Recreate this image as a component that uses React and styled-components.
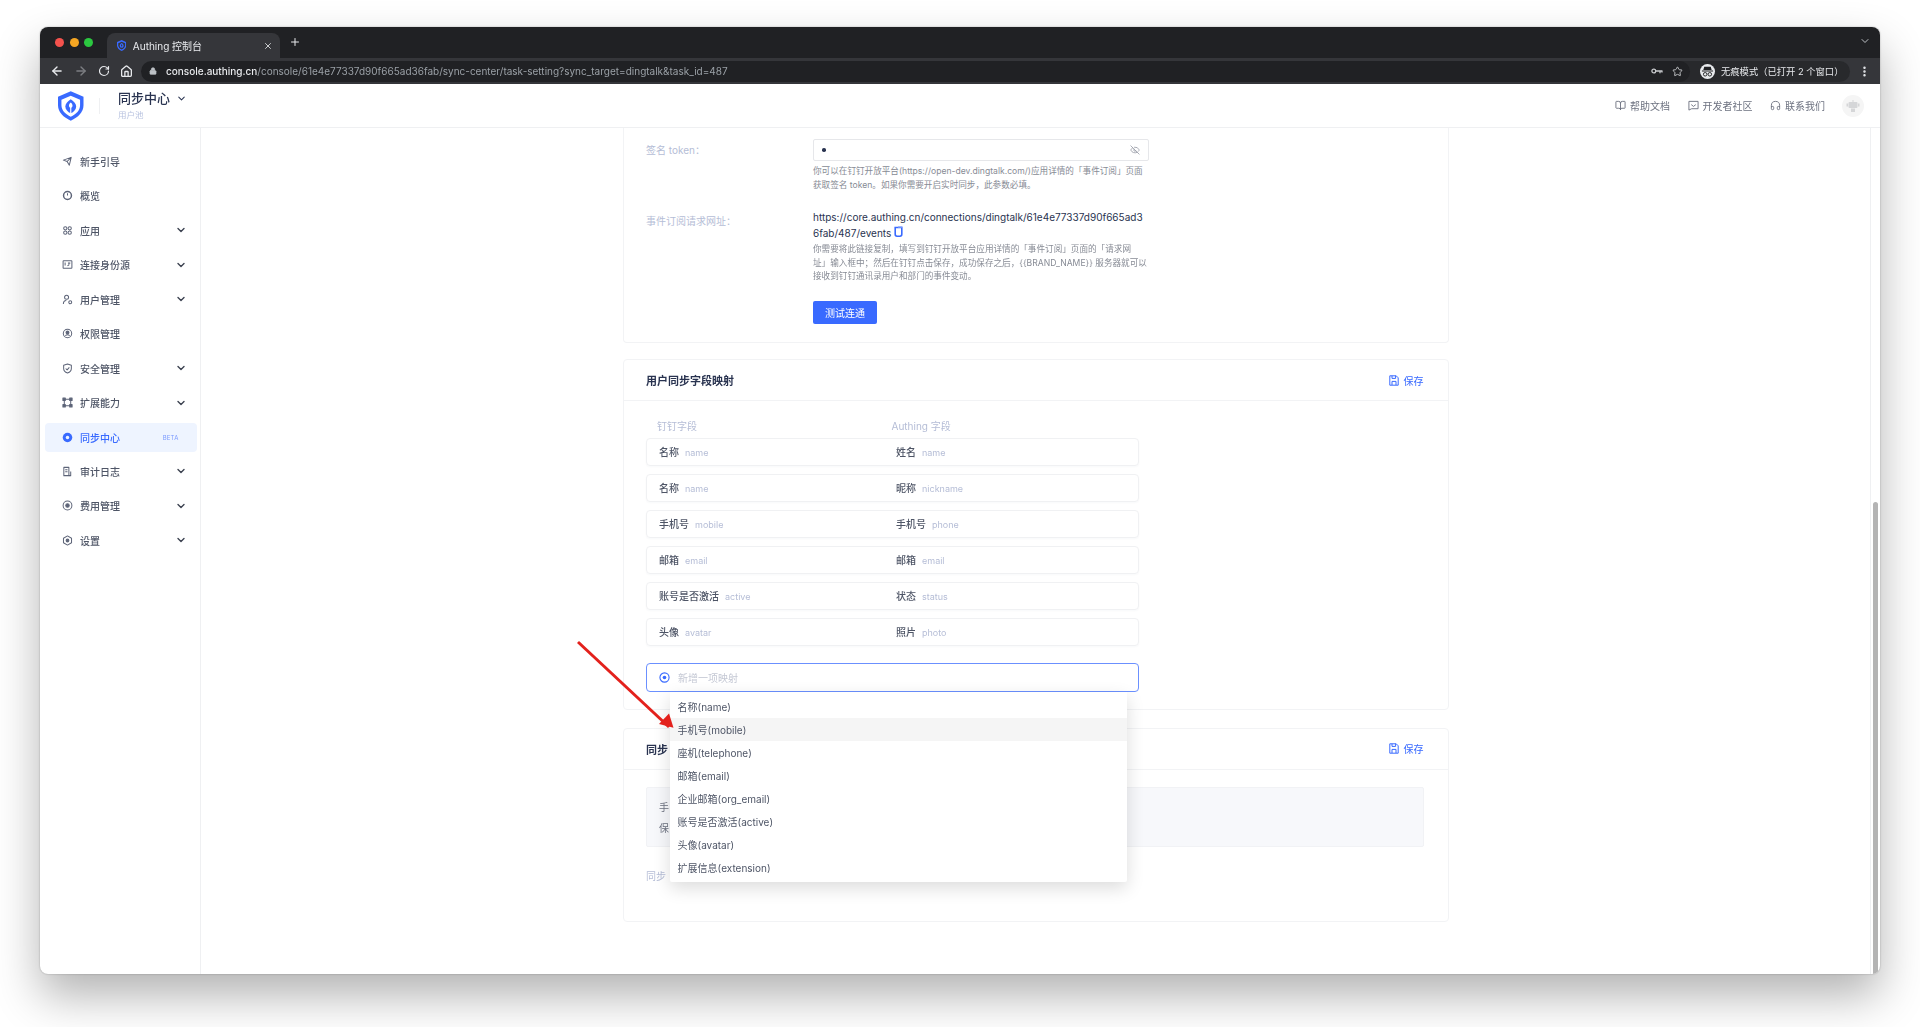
import React from 'react'
import styled, { createGlobalStyle } from 'styled-components'
import {
  ArrowLeft, ArrowRight, BookOpen, ChevronDown, EllipsisVertical, EyeOff,
  Headphones, House, Lock, Plus, RotateCw, Star, X
} from 'lucide-react'

//-----------------------------------------------------------------------------
// Data
//-----------------------------------------------------------------------------
const PRIMARY = '#396aff'
const TASK_URL = 'console/61e4e77337d90f665ad36fab/sync-center/task-setting?sync_target=dingtalk&task_id=487'

const NAV_ITEMS = [
  { label: '新手引导', icon: 'send' },
  { label: '概览', icon: 'gauge' },
  { label: '应用', icon: 'apps', more: true },
  { label: '连接身份源', icon: 'card', more: true },
  { label: '用户管理', icon: 'user', more: true },
  { label: '权限管理', icon: 'lock', },
  { label: '安全管理', icon: 'shield', more: true },
  { label: '扩展能力', icon: 'nodes', more: true },
  { label: '同步中心', icon: 'sync', active: true },
  { label: '审计日志', icon: 'log', more: true },
  { label: '费用管理', icon: 'coin', more: true },
  { label: '设置', icon: 'gear', more: true }
]

const MAPPINGS = [
  ['名称', 'name', '姓名', 'name'],
  ['名称', 'name', '昵称', 'nickname'],
  ['手机号', 'mobile', '手机号', 'phone'],
  ['邮箱', 'email', '邮箱', 'email'],
  ['账号是否激活', 'active', '状态', 'status'],
  ['头像', 'avatar', '照片', 'photo']
]

const OPTIONS = [
  '名称(name)', '手机号(mobile)', '座机(telephone)', '邮箱(email)',
  '企业邮箱(org_email)', '账号是否激活(active)', '头像(avatar)', '扩展信息(extension)'
]

//-----------------------------------------------------------------------------
// Icons
//-----------------------------------------------------------------------------
const NAV_PATHS = {
  send: <path d="M1.5 4.5 10 1.5 8 10 5.6 6 1.5 4.5ZM5.6 6 10 1.5" />,
  gauge: <><circle cx="6" cy="6" r="4.3" strokeWidth="1.6" /><path d="M6 6V3.5" /></>,
  apps: <><circle cx="3.6" cy="3.6" r="1.8" /><circle cx="8.4" cy="3.6" r="1.8" /><circle cx="3.6" cy="8.4" r="1.8" /><circle cx="8.4" cy="8.4" r="1.8" /></>,
  card: <><rect x="1.2" y="1.8" width="9.6" height="8.4" rx=".6" /><path d="M6.5 4.5h2.5M6 7.6l2-1.6M3.4 3.8v3.4" /></>,
  user: <><circle cx="5" cy="3.5" r="2.2" /><path d="M1.5 11c0-2.6 1.2-4 3.2-4" /><circle cx="9" cy="9" r="1.6" /></>,
  lock: <><circle cx="6" cy="6" r="4.6" /><circle cx="6" cy="5" r="1.6" fill="currentColor" /><path d="M3.6 8.4c1.2-1 3.6-1 4.8 0" /></>,
  shield: <path d="M6 1 10.2 2.4V6c0 2.6-2 4.2-4.2 5C3.8 10.2 1.8 8.6 1.8 6V2.4L6 1ZM4 6l1.6 1.5L8 4.8" />,
  nodes: <><path d="M3 2.5h6M3 9.5h6M2.5 3v6M9.5 3v6" /><rect x="1" y="1.2" width="2.6" height="2.6" fill="currentColor" /><rect x="8.4" y="1.2" width="2.6" height="2.6" fill="currentColor" /><rect x="1" y="8.2" width="2.6" height="2.6" fill="currentColor" /><rect x="8.4" y="8.2" width="2.6" height="2.6" fill="currentColor" /></>,
  sync: <><circle cx="6" cy="6" r="5.2" fill="currentColor" stroke="none" /><circle cx="6" cy="6" r="1.9" fill="#eef4ff" stroke="none" /></>,
  log: <><path d="M2 10.5V1.5h5.5v9H2ZM3.5 4h2.5M3.5 6.2h2.5" /><path d="M9.5 6v4.5H7.5" /></>,
  coin: <><circle cx="6" cy="6" r="4.8" /><circle cx="6" cy="6" r="1.9" fill="currentColor" /></>,
  gear: <><path d="M6 1 10.4 3.5V8.5L6 11 1.6 8.5V3.5L6 1Z" /><circle cx="6" cy="6" r="1.5" fill="currentColor" /></>
}

const NavIcon = ({ name }) => (
  <svg width="11" height="11" viewBox="0 0 12 12" fill="none" stroke="currentColor" strokeWidth="1.1" strokeLinejoin="round">
    {NAV_PATHS[name]}
  </svg>
)

const ShieldLogo = ({ size = 30, inner = '#fff' }) => (
  <svg width={size * 0.85} height={size} viewBox="0 0 26 30">
    <path d="M13 0 26 5.5V14c0 7.5-5.5 12.5-13 16C5.5 26.5 0 21.5 0 14V5.5L13 0Z" fill={PRIMARY} />
    <path d="M13 4.5 22.5 8.5V14c0 5.5-4 9.3-9.5 12-5.5-2.7-9.5-6.500-9.500-12V8.500L13 4.500Z" fill={inner} />
    <path d="M13 8c3.4 2.2 5.5 4.7 5.5 7.5 0 3.3-2.5 5.5-5.5 7-3-1.5-5.5-3.7-5.5-7C7.5 12.7 9.6 10.2 13 8Z" fill={PRIMARY} />
    <path d="M13 11.5c1.3 1 1.8 2.2 1.8 3.3 0 1-.7 1.8-1.8 2.4-1.1-.6-1.8-1.4-1.8-2.4 0-1.1.5-2.3 1.8-3.3Z" fill={inner} />
    <path d="M13 17v6" stroke={inner} strokeWidth="1.2" />
  </svg>
)

const SaveIcon = () => (
  <svg width="10" height="11" viewBox="0 0 10 11" fill="none" stroke="currentColor" strokeWidth="1">
    <path d="M.8.8h6.4l2 2v7.4H.8V.8Z" />
    <path d="M3 .8v2.6h3.6V.8M3 10V6.4h4V10" />
  </svg>
)

const CopyIcon = () => (
  <svg width="9" height="11" viewBox="0 0 9 11" fill="none" stroke={PRIMARY} strokeWidth="1.6">
    <path d="M1.2 1.5h6.6v6.8c0 1-.7 1.9-1.9 1.9H3c-1 0-1.8-.8-1.8-1.9V1.5Z" />
    <path d="M4 .7h4.3" stroke="#9db6ff" />
  </svg>
)

const AddIcon = () => (
  <svg width="11" height="11" viewBox="0 0 12 12" fill="none" stroke={PRIMARY} strokeWidth="1.2">
    <circle cx="6" cy="6" r="5" />
    <circle cx="6" cy="6" r="2" fill={PRIMARY} stroke="none" />
  </svg>
)

const CommunityIcon = () => (
  <svg width="11" height="11" viewBox="0 0 12 12" fill="none" stroke="currentColor" strokeWidth="1">
    <path d="M1 1.5h10v8H4L1 11V1.5Z" />
    <path d="M3.5 5 6 7l2.5-2" />
  </svg>
)

const SavedKeyIcon = () => (
  <svg width="12" height="8" viewBox="0 0 12 8" fill="none" stroke="#c8cacd" strokeWidth="1.3">
    <circle cx="2.8" cy="4" r="1.9" />
    <path d="M4.8 4H11.5M9 4v2.2M11 4v1.6" />
  </svg>
)

const IncognitoIcon = () => (
  <IncognitoBadge>
    <svg width="13" height="13" viewBox="0 0 14 14" fill="#202124">
      <path d="M3.5 2h7l1 3.5h-9L3.5 2ZM1 6h12v1H1V6Z" />
      <circle cx="4.5" cy="10" r="1.9" fill="none" stroke="#202124" strokeWidth="1" />
      <circle cx="9.5" cy="10" r="1.9" fill="none" stroke="#202124" strokeWidth="1" />
    </svg>
  </IncognitoBadge>
)

const RobotAvatar = () => (
  <Avatar>
    <svg width="14" height="14" viewBox="0 0 14 14" fill="#d5d6d8">
      <rect x="2.5" y="3" width="9" height="6" rx="1" />
      <rect x="0.5" y="4.5" width="1.5" height="3" />
      <rect x="12" y="4.5" width="1.5" height="3" />
      <rect x="5" y="9.5" width="4" height="3.5" />
      <rect x="6.5" y="1" width="1" height="2" />
    </svg>
  </Avatar>
)

const RedArrow = () => (
  <ArrowOverlay width="110" height="100" viewBox="0 0 110 100">
    <path d="M8 7 99 92" stroke="#e3211c" strokeWidth="3" />
    <path d="M103.5 92.7 89 89 99 78.5Z" fill="#e3211c" />
  </ArrowOverlay>
)

//-----------------------------------------------------------------------------
// Component
//-----------------------------------------------------------------------------
const CardHeader = ({ title }) => (
  <CardHead>
    <CardTitle>{title}</CardTitle>
    <SaveButton><SaveIcon />保存</SaveButton>
  </CardHead>
)

const App = () => {
  return (
    <>
      <GlobalStyle />
      <BrowserWindow>
        <TabStrip>
          <TrafficLights>
            <Light color="#f4524d" />
            <Light color="#f5a623" />
            <Light color="#2bc840" />
          </TrafficLights>
          <Tab>
            <ShieldLogo size={11} inner="#35363a" />
            <TabTitle>Authing 控制台</TabTitle>
            <X size={10} color="#e8eaed" />
          </Tab>
          <NewTab><Plus size={12} /></NewTab>
          <TabMenu><ChevronDown size={12} /></TabMenu>
        </TabStrip>

        <Toolbar>
          <NavButtons>
            <ArrowLeft size={14} strokeWidth={2.4} color="#e8eaed" />
            <ArrowRight size={14} strokeWidth={2.4} color="#7c7e82" />
            <RotateCw size={12} strokeWidth={2.4} color="#e8eaed" />
            <House size={13} strokeWidth={2.4} color="#e8eaed" />
          </NavButtons>
          <AddressBar>
            <Lock size={8} color="#bdc1c6" fill="#bdc1c6" />
            <UrlText><strong>console.authing.cn</strong>/{TASK_URL}</UrlText>
            <SavedKeyIcon />
            <Star size={11} color="#c8cacd" />
          </AddressBar>
          <IncognitoPill>
            <IncognitoIcon />
            无痕模式（已打开 2 个窗口）
          </IncognitoPill>
          <ToolbarMenu><EllipsisVertical size={13} strokeWidth={2.6} /></ToolbarMenu>
        </Toolbar>

        <AppHeader>
          <LogoCell><ShieldLogo size={30} /></LogoCell>
          <AppTitleBlock>
            <AppTitle>同步中心 <ChevronDown size={11} strokeWidth={2.2} /></AppTitle>
            <AppSubtitle>用户池</AppSubtitle>
          </AppTitleBlock>
          <HeaderLinks>
            <HeaderLink><BookOpen size={11} />帮助文档</HeaderLink>
            <HeaderLink><CommunityIcon />开发者社区</HeaderLink>
            <HeaderLink><Headphones size={11} />联系我们</HeaderLink>
          </HeaderLinks>
          <RobotAvatar />
        </AppHeader>

        <Workspace>
          <Sidebar>
            {NAV_ITEMS.map(item => (
              <NavItem key={item.label} $active={item.active}>
                <NavIconSlot $active={item.active}><NavIcon name={item.icon} /></NavIconSlot>
                <NavLabel>{item.label}</NavLabel>
                {item.active && <BetaTag>BETA</BetaTag>}
                {item.more && <ChevronDown size={12} strokeWidth={2.8} color="#3c4250" />}
              </NavItem>
            ))}
          </Sidebar>

          <Main>
            <Column>
              <ClippedCard>
                <FormRow>
                  <FormLabel>签名 token：</FormLabel>
                  <div>
                    <SecretInput>
                      <SecretDot />
                      <EyeOff size={10} color="#9a9ea8" />
                    </SecretInput>
                    <HelpText>
                      你可以在钉钉开放平台(https://open-dev.dingtalk.com/)应用详情的「事件订阅」页面<br />
                      获取签名 token。如果你需要开启实时同步，此参数必填。
                    </HelpText>
                  </div>
                </FormRow>
                <FormRow $spaced>
                  <FormLabel $offset>事件订阅请求网址：</FormLabel>
                  <div>
                    <UrlValue>
                      https://core.authing.cn/connections/dingtalk/61e4e77337d90f665ad3<br />
                      6fab/487/events <CopyIcon />
                    </UrlValue>
                    <HelpText $tight>
                      你需要将此链接复制，填写到钉钉开放平台应用详情的「事件订阅」页面的「请求网<br />
                      址」输入框中；然后在钉钉点击保存，成功保存之后，{'{{BRAND_NAME}}'} 服务器就可以<br />
                      接收到钉钉通讯录用户和部门的事件变动。
                    </HelpText>
                    <PrimaryButton>测试连通</PrimaryButton>
                  </div>
                </FormRow>
              </ClippedCard>

              <Card>
                <CardHeader title="用户同步字段映射" />
                <MappingBody>
                  <MappingHead>
                    <span>钉钉字段</span>
                    <span>Authing 字段</span>
                  </MappingHead>
                  {MAPPINGS.map(([from, fromKey, to, toKey]) => (
                    <MappingRow key={fromKey + toKey}>
                      <MappingCell>{from}<FieldKey>{fromKey}</FieldKey></MappingCell>
                      <MappingCell>{to}<FieldKey>{toKey}</FieldKey></MappingCell>
                    </MappingRow>
                  ))}
                  <SelectWrap>
                    <SelectBox>
                      <AddIcon />
                      <Placeholder>新增一项映射</Placeholder>
                    </SelectBox>
                    <Dropdown>
                      {OPTIONS.map((option, index) => (
                        <DropdownOption key={option} $hovered={index === 1}>{option}</DropdownOption>
                      ))}
                    </Dropdown>
                  </SelectWrap>
                </MappingBody>
              </Card>

              <LastCard>
                <CardHeader title="同步" />
                <RulesBody>
                  <InfoBox>
                    <div>手</div>
                    <div>保</div>
                  </InfoBox>
                  <RulesLabel>同步</RulesLabel>
                </RulesBody>
              </LastCard>
            </Column>
          </Main>

          <ScrollTrack>
            <ScrollThumb />
          </ScrollTrack>
        </Workspace>

        <RedArrow />
      </BrowserWindow>
    </>
  )
}

//-----------------------------------------------------------------------------
// Styled Components
//-----------------------------------------------------------------------------
const GlobalStyle = createGlobalStyle`
  html, body {
    margin: 0;
    height: 1027px;
    overflow: hidden;
    background: #fff;
    font-family: Inter, "Noto Sans CJK SC", sans-serif;
  }
`

const BrowserWindow = styled.div`
  position: relative;
  margin: 27px 0 0 40px;
  width: 1840px;
  height: 947px;
  display: flex;
  flex-direction: column;
  background: #fff;
  border-radius: 8px;
  box-shadow: 0 22px 46px rgba(0, 0, 0, 0.3), 0 0 2px rgba(0, 0, 0, 0.3);
  overflow: hidden;
  filter: blur(0.35px);
`

const TabStrip = styled.div`
  height: 31px;
  flex: none;
  display: flex;
  align-items: flex-end;
  background: #202124;
`

const TrafficLights = styled.div`
  display: flex;
  gap: 5.5px;
  padding: 0 0 11px 15px;
  width: 66.5px;
  box-sizing: border-box;
`

const Light = styled.span`
  width: 9px;
  height: 9px;
  border-radius: 50%;
  background: ${ props => props.color };
`

const Tab = styled.div`
  width: 173px;
  height: 25px;
  display: flex;
  align-items: center;
  gap: 7px;
  padding: 0 7px 0 10px;
  box-sizing: border-box;
  background: #35363a;
  border-radius: 8px 8px 0 0;
`

const TabTitle = styled.span`
  flex: 1;
  color: #e8eaed;
  font-size: 10px;
`

const NewTab = styled.div`
  color: #e8eaed;
  margin: 0 0 6px 9px;
`

const TabMenu = styled.div`
  color: #bdc1c6;
  margin: 0 9px 7px auto;
`

const Toolbar = styled.div`
  height: 26px;
  flex: none;
  display: flex;
  align-items: center;
  background: #35363a;
`

const NavButtons = styled.div`
  display: flex;
  align-items: center;
  gap: 10px;
  padding-left: 10px;
  width: 91px;
`

const AddressBar = styled.div`
  position: relative;
  z-index: 1;
  width: 1549px;
  height: 21px;
  box-sizing: border-box;
  display: flex;
  align-items: center;
  padding: 0 7px 0 8px;
  gap: 9px;
  background: #202124;
  border-radius: 11px;
  color: #9aa0a6;
`

const UrlText = styled.span`
  flex: 1;
  font-size: 10px;
  white-space: nowrap;
  & > strong {
    font-weight: 500;
    color: #e8eaed;
  }
`

const IncognitoPill = styled.div`
  width: 170px;
  margin-left: -10px;
  padding-left: 20px;
  height: 21px;
  box-sizing: border-box;
  display: flex;
  align-items: center;
  gap: 6px;
  background: #28292c;
  border-radius: 0 11px 11px 0;
  color: #e8eaed;
  font-size: 9.3px;
  white-space: nowrap;
`

const IncognitoBadge = styled.span`
  width: 15px;
  height: 15px;
  flex: none;
  display: flex;
  align-items: center;
  justify-content: center;
  background: #e8eaed;
  border-radius: 50%;
`

const ToolbarMenu = styled.div`
  color: #e8eaed;
  display: flex;
  margin-left: 8px;
`

const AppHeader = styled.header`
  height: 44px;
  flex: none;
  box-sizing: border-box;
  display: flex;
  align-items: center;
  border-bottom: 1px solid #eff0f2;
  padding-right: 16px;
`

const LogoCell = styled.div`
  width: 60px;
  height: 16px;
  flex: none;
  box-sizing: border-box;
  display: flex;
  align-items: center;
  justify-content: center;
  border-right: 1px solid #eff0f2;
  padding-left: 3px;
`

const AppTitleBlock = styled.div`
  margin-left: 18px;
`

const AppTitle = styled.div`
  display: flex;
  align-items: center;
  gap: 6px;
  color: #293350;
  font-size: 13px;
  font-weight: 500;
  line-height: 17px;
`

const AppSubtitle = styled.div`
  color: #b9c3e0;
  font-size: 8.5px;
  line-height: 12px;
  margin-top: 2px;
`

const HeaderLinks = styled.div`
  margin-left: auto;
  display: flex;
  gap: 17.5px;
`

const HeaderLink = styled.div`
  display: flex;
  align-items: center;
  gap: 4px;
  color: #6d7280;
  font-size: 10px;
`

const Avatar = styled.div`
  width: 22px;
  height: 22px;
  margin-left: 17px;
  display: flex;
  align-items: center;
  justify-content: center;
  background: #f5f5f5;
  border-radius: 50%;
`

const Workspace = styled.div`
  flex: 1;
  min-height: 0;
  display: flex;
`

const Sidebar = styled.nav`
  width: 161px;
  flex: none;
  box-sizing: border-box;
  padding: 19px 3px 0 5px;
  border-right: 1px solid #eff0f2;
  display: flex;
  flex-direction: column;
  gap: 5.45px;
`

const NavItem = styled.div`
  height: 29px;
  flex: none;
  display: flex;
  align-items: center;
  padding: 0 10.5px 0 17px;
  border-radius: 4px;
  color: ${ props => props.$active ? PRIMARY : '#4e5566' };
  background: ${ props => props.$active ? '#eef4ff' : 'transparent' };
`

const NavIconSlot = styled.span`
  display: flex;
  width: 11px;
  margin-right: 7px;
  color: ${ props => props.$active ? PRIMARY : '#5d6478' };
`

const NavLabel = styled.span`
  flex: 1;
  font-size: 10px;
  font-weight: 500;
`

const BetaTag = styled.span`
  font-size: 6px;
  color: #7c9bff;
  margin-right: 8px;
  letter-spacing: 0.2px;
`

const Main = styled.main`
  flex: 1;
  min-width: 0;
  overflow: hidden;
  display: flex;
  justify-content: center;
`

const Column = styled.div`
  width: 826px;
  flex: none;
  display: flex;
  flex-direction: column;
  gap: 16.5px;
`

const Card = styled.section`
  background: #fff;
  border: 1px solid #f2f3f5;
  border-radius: 4px;
  box-sizing: border-box;
`

const ClippedCard = styled(Card)`
  border-top: none;
  border-radius: 0 0 4px 4px;
  padding: 11px 0 18px 22.5px;
`

const LastCard = styled(Card)`
  height: 194px;
  margin-top: 1px;
`

const FormRow = styled.div`
  display: grid;
  grid-template-columns: 167px 336px;
  margin-top: ${ props => props.$spaced ? '17px' : 0 };
`

const FormLabel = styled.div`
  color: #b5bdd6;
  font-size: 10px;
  line-height: 22px;
  padding-top: ${ props => props.$offset ? '1px' : 0 };
`

const SecretInput = styled.div`
  height: 22px;
  box-sizing: border-box;
  display: flex;
  align-items: center;
  justify-content: space-between;
  padding: 0 8px;
  border: 1px solid #e6e7ea;
  border-radius: 2px;
`

const SecretDot = styled.span`
  width: 3.5px;
  height: 3.5px;
  background: #293350;
  border-radius: 50%;
`

const HelpText = styled.div`
  margin-top: ${ props => props.$tight ? '2px' : '3px' };
  color: #878b95;
  font-size: 8.6px;
  line-height: ${ props => props.$tight ? '13.5px' : '14px' };
  white-space: nowrap;
`

const UrlValue = styled.div`
  color: #293350;
  font-size: 10px;
  line-height: 16px;
  white-space: nowrap;
`

const PrimaryButton = styled.div`
  margin-top: 17px;
  width: 64px;
  height: 23px;
  display: flex;
  align-items: center;
  justify-content: center;
  background: ${ PRIMARY };
  border-radius: 2px;
  color: #fff;
  font-size: 10px;
`

const CardHead = styled.div`
  height: 41px;
  box-sizing: border-box;
  display: flex;
  align-items: center;
  justify-content: space-between;
  padding: 0 24px 0 22.5px;
  border-bottom: 1px solid #f2f3f5;
`

const CardTitle = styled.div`
  color: #293350;
  font-size: 11px;
  font-weight: 600;
`

const SaveButton = styled.div`
  display: flex;
  align-items: center;
  gap: 5px;
  color: ${ PRIMARY };
  font-size: 10px;
`

const MappingBody = styled.div`
  padding: 17px 0 17px 22.5px;
`

const MappingHead = styled.div`
  width: 491px;
  display: grid;
  grid-template-columns: 234.5px 1fr;
  padding-left: 11px;
  box-sizing: border-box;
  color: #b5bdd6;
  font-size: 10px;
  line-height: 16px;
  margin-bottom: 4px;
`

const MappingRow = styled.div`
  width: 492.5px;
  height: 28px;
  margin-bottom: 8px;
  box-sizing: border-box;
  display: grid;
  grid-template-columns: 237px 1fr;
  align-items: center;
  padding: 0 0 2px 12px;
  border: 1px solid #f0f1f3;
  border-radius: 4px;
  box-shadow: 0 1px 2px rgba(40, 50, 80, 0.03);
`

const MappingCell = styled.div`
  color: #4e5566;
  font-size: 10px;
  font-weight: 500;
`

const FieldKey = styled.span`
  margin-left: 6px;
  color: #b5bdd6;
  font-size: 9px;
  font-weight: 400;
`

const SelectWrap = styled.div`
  position: relative;
  width: 492.5px;
  margin-top: 17px;
`

const SelectBox = styled.div`
  height: 29px;
  box-sizing: border-box;
  display: flex;
  align-items: center;
  gap: 8px;
  padding-left: 12px;
  border: 1px solid #6b90ff;
  border-radius: 4px;
`

const Placeholder = styled.span`
  color: #c4c8d4;
  font-size: 10px;
`

const Dropdown = styled.div`
  position: absolute;
  top: 29px;
  left: 23.5px;
  z-index: 5;
  width: 457px;
  padding: 3px 0;
  background: #fff;
  box-shadow: 0 6px 18px rgba(0, 0, 0, 0.14);
  border-radius: 0 0 2px 2px;
`

const DropdownOption = styled.div`
  height: 23px;
  box-sizing: border-box;
  display: flex;
  align-items: center;
  padding: 0 0 1px 8px;
  color: #4e5566;
  font-size: 10px;
  background: ${ props => props.$hovered ? '#f5f5f5' : 'transparent' };
`

const RulesBody = styled.div`
  padding: 17.5px 24px 0 22.5px;
`

const InfoBox = styled.div`
  height: 60px;
  box-sizing: border-box;
  padding: 9px 12px;
  background: #f7f8fb;
  border: 1px solid #f1f2f5;
  border-radius: 2px;
  color: #6d7280;
  font-size: 10px;
  line-height: 21px;
`

const RulesLabel = styled.div`
  margin-top: 21px;
  color: #b5bdd6;
  font-size: 10px;
`

const ScrollTrack = styled.div`
  width: 10px;
  flex: none;
  box-sizing: border-box;
  padding: 374px 2px 0 2px;
  border-left: 1px solid #eff0f2;
`

const ScrollThumb = styled.div`
  height: 100%;
  background: #b4b4b4;
  border-radius: 3px 3px 0 0;
`

const ArrowOverlay = styled.svg`
  position: absolute;
  left: 530px;
  top: 608px;
  z-index: 10;
`

export default App
